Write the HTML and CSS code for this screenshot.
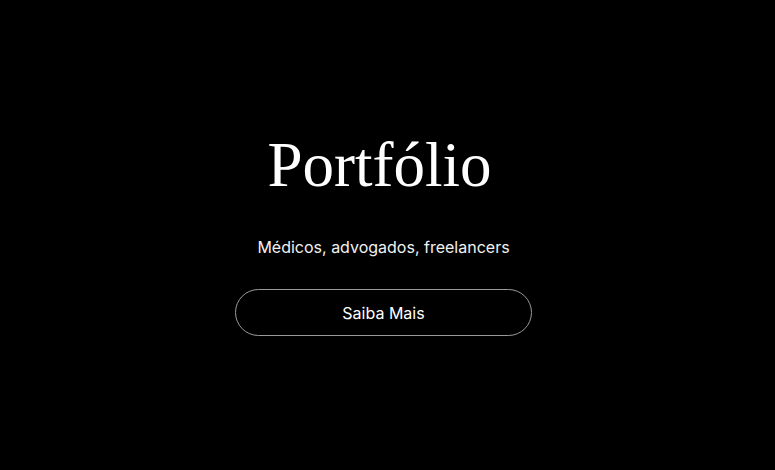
FILE: index.html
```html
<!DOCTYPE html>
<html lang="pt">
<head>
<meta charset="utf-8">
<link rel="stylesheet" href="styles.css">
</head>
<body>
<section class="hero">
  <h1 class="title">Portfólio</h1>
  <p class="subtitle">Médicos, advogados, freelancers</p>
  <a class="btn" href="#">Saiba Mais</a>
</section>
</body>
</html>
```
FILE: styles.css
```css
html, body {
  margin: 0;
  padding: 0;
  background: #000;
  height: 100%;
}
.hero {
  height: 470px;
  box-sizing: border-box;
  display: flex;
  flex-direction: column;
  align-items: center;
  padding-top: 127px;
  padding-right: 8px;
  color: #fff;
  font-family: Inter, "Liberation Sans", sans-serif;
}
.title {
  margin: 0 8px 0 0;
  font-family: "Liberation Serif", serif;
  font-weight: 400;
  font-size: 63px;
  line-height: 76px;
  letter-spacing: 0;
  color: #fff;
}
.subtitle {
  margin: 34px 0 0;
  font-size: 16px;
  line-height: 20px;
  color: #f2f2f2;
}
.btn {
  margin-top: 32px;
  width: 297px;
  height: 47px;
  box-sizing: border-box;
  border: 1px solid #9a9a9a;
  border-radius: 24px;
  display: flex;
  align-items: center;
  justify-content: center;
  color: #fff;
  text-decoration: none;
  font-size: 16px;
}
```
